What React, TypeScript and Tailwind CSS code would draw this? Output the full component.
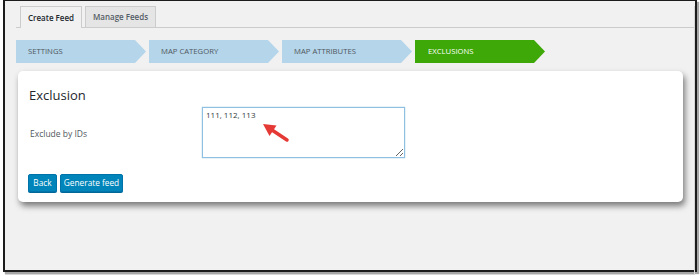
import React from "react";

const steps = [
  { label: "SETTINGS", active: false },
  { label: "MAP CATEGORY", active: false },
  { label: "MAP ATTRIBUTES", active: false },
  { label: "EXCLUSIONS", active: true },
];

export default function App() {
  return (
    <div className="w-[700px] h-[278px] bg-white overflow-hidden font-['Open_Sans',sans-serif]">
      <div className="ml-[3px] w-[694px] h-[272px] border-2 border-t-[1px] border-[#1c1c1c] bg-[#f1f1f1] shadow-[2px_2px_1px_rgba(0,0,0,0.35)]">
        <div className="h-full border-r border-b border-[#d6d6d6]">
          {/* Tabs */}
          <div className="mt-[5px] ml-[11px] h-[22px] flex items-end gap-[3px] pl-[4px] border-b border-[#cccccc]">
            <div className="h-[22px] -mb-px w-[62px] flex items-center justify-center border border-b-0 border-[#cccccc] bg-[#f1f1f1] text-[8px] font-semibold text-[#23282d]">
              Create Feed
            </div>
            <div className="h-[21px] w-[71px] flex items-center justify-center border border-b-0 border-[#cccccc] bg-[#e5e5e5] text-[8px] font-semibold text-[#555d66]">
              Manage Feeds
            </div>
          </div>

          {/* Steps */}
          <div className="mt-[12px] ml-[11px] flex gap-[3px] h-[23px]">
            {steps.map((s) => (
              <div
                key={s.label}
                className={
                  s.active
                    ? "w-[130px] h-[23px] flex items-center pl-[13px] bg-[#3da807] text-white text-[7.7px] [clip-path:polygon(0_0,119px_0,130px_50%,119px_100%,0_100%)]"
                    : "w-[130px] h-[23px] flex items-center pl-[12px] bg-[#b4d5ea] text-[#50575e] text-[7.7px] [clip-path:polygon(0_0,119px_0,130px_50%,119px_100%,0_100%)]"
                }
              >
                {s.label}
              </div>
            ))}
          </div>

          {/* Card */}
          <div className="mt-[8px] ml-[13px] w-[665px] rounded-[5px] bg-white shadow-[2px_4px_6px_rgba(0,0,0,0.5)] pl-[11px] pt-[16px] pb-[10px]">
            <div className="text-[13px] leading-[17px] text-[#23282d]">Exclusion</div>
            <div className="mt-[3px] flex items-center">
              <div className="w-[173px] pt-[3px] text-[8.5px] text-[#50575e] pl-[1px]">Exclude by IDs</div>
              <div className="relative">
                <textarea
                  defaultValue="111, 112, 113"
                  className="block w-[203px] h-[51px] border border-[#8fc0e4] bg-white px-[3px] pt-[1px] text-[8px] leading-[12px] text-[#32373c] font-['Open_Sans',sans-serif] outline-none resize shadow-[0_0_1px_rgba(30,140,190,0.6)]"
                />
                <svg
                  className="absolute left-0 top-0 pointer-events-none"
                  width="100"
                  height="45"
                  viewBox="0 0 100 45"
                >
                  <line x1="85" y1="33" x2="70" y2="23" stroke="#e53935" strokeWidth="3.5" strokeLinecap="round" />
                  <polygon points="61,17 74.5,18.5 67.5,29" fill="#e53935" />
                </svg>
              </div>
            </div>
            <div className="mt-[16px] -ml-px flex gap-[3px]">
              <button className="w-[29px] h-[18px] rounded-[2px] bg-[#0085ba] border border-[#0073aa] shadow-[0_1px_0_#006799] text-white text-[8.3px] leading-none flex items-center justify-center">
                Back
              </button>
              <button className="w-[63px] h-[18px] rounded-[2px] bg-[#0085ba] border border-[#0073aa] shadow-[0_1px_0_#006799] text-white text-[8.3px] leading-none flex items-center justify-center">
                Generate feed
              </button>
            </div>
          </div>
        </div>
      </div>
    </div>
  );
}
